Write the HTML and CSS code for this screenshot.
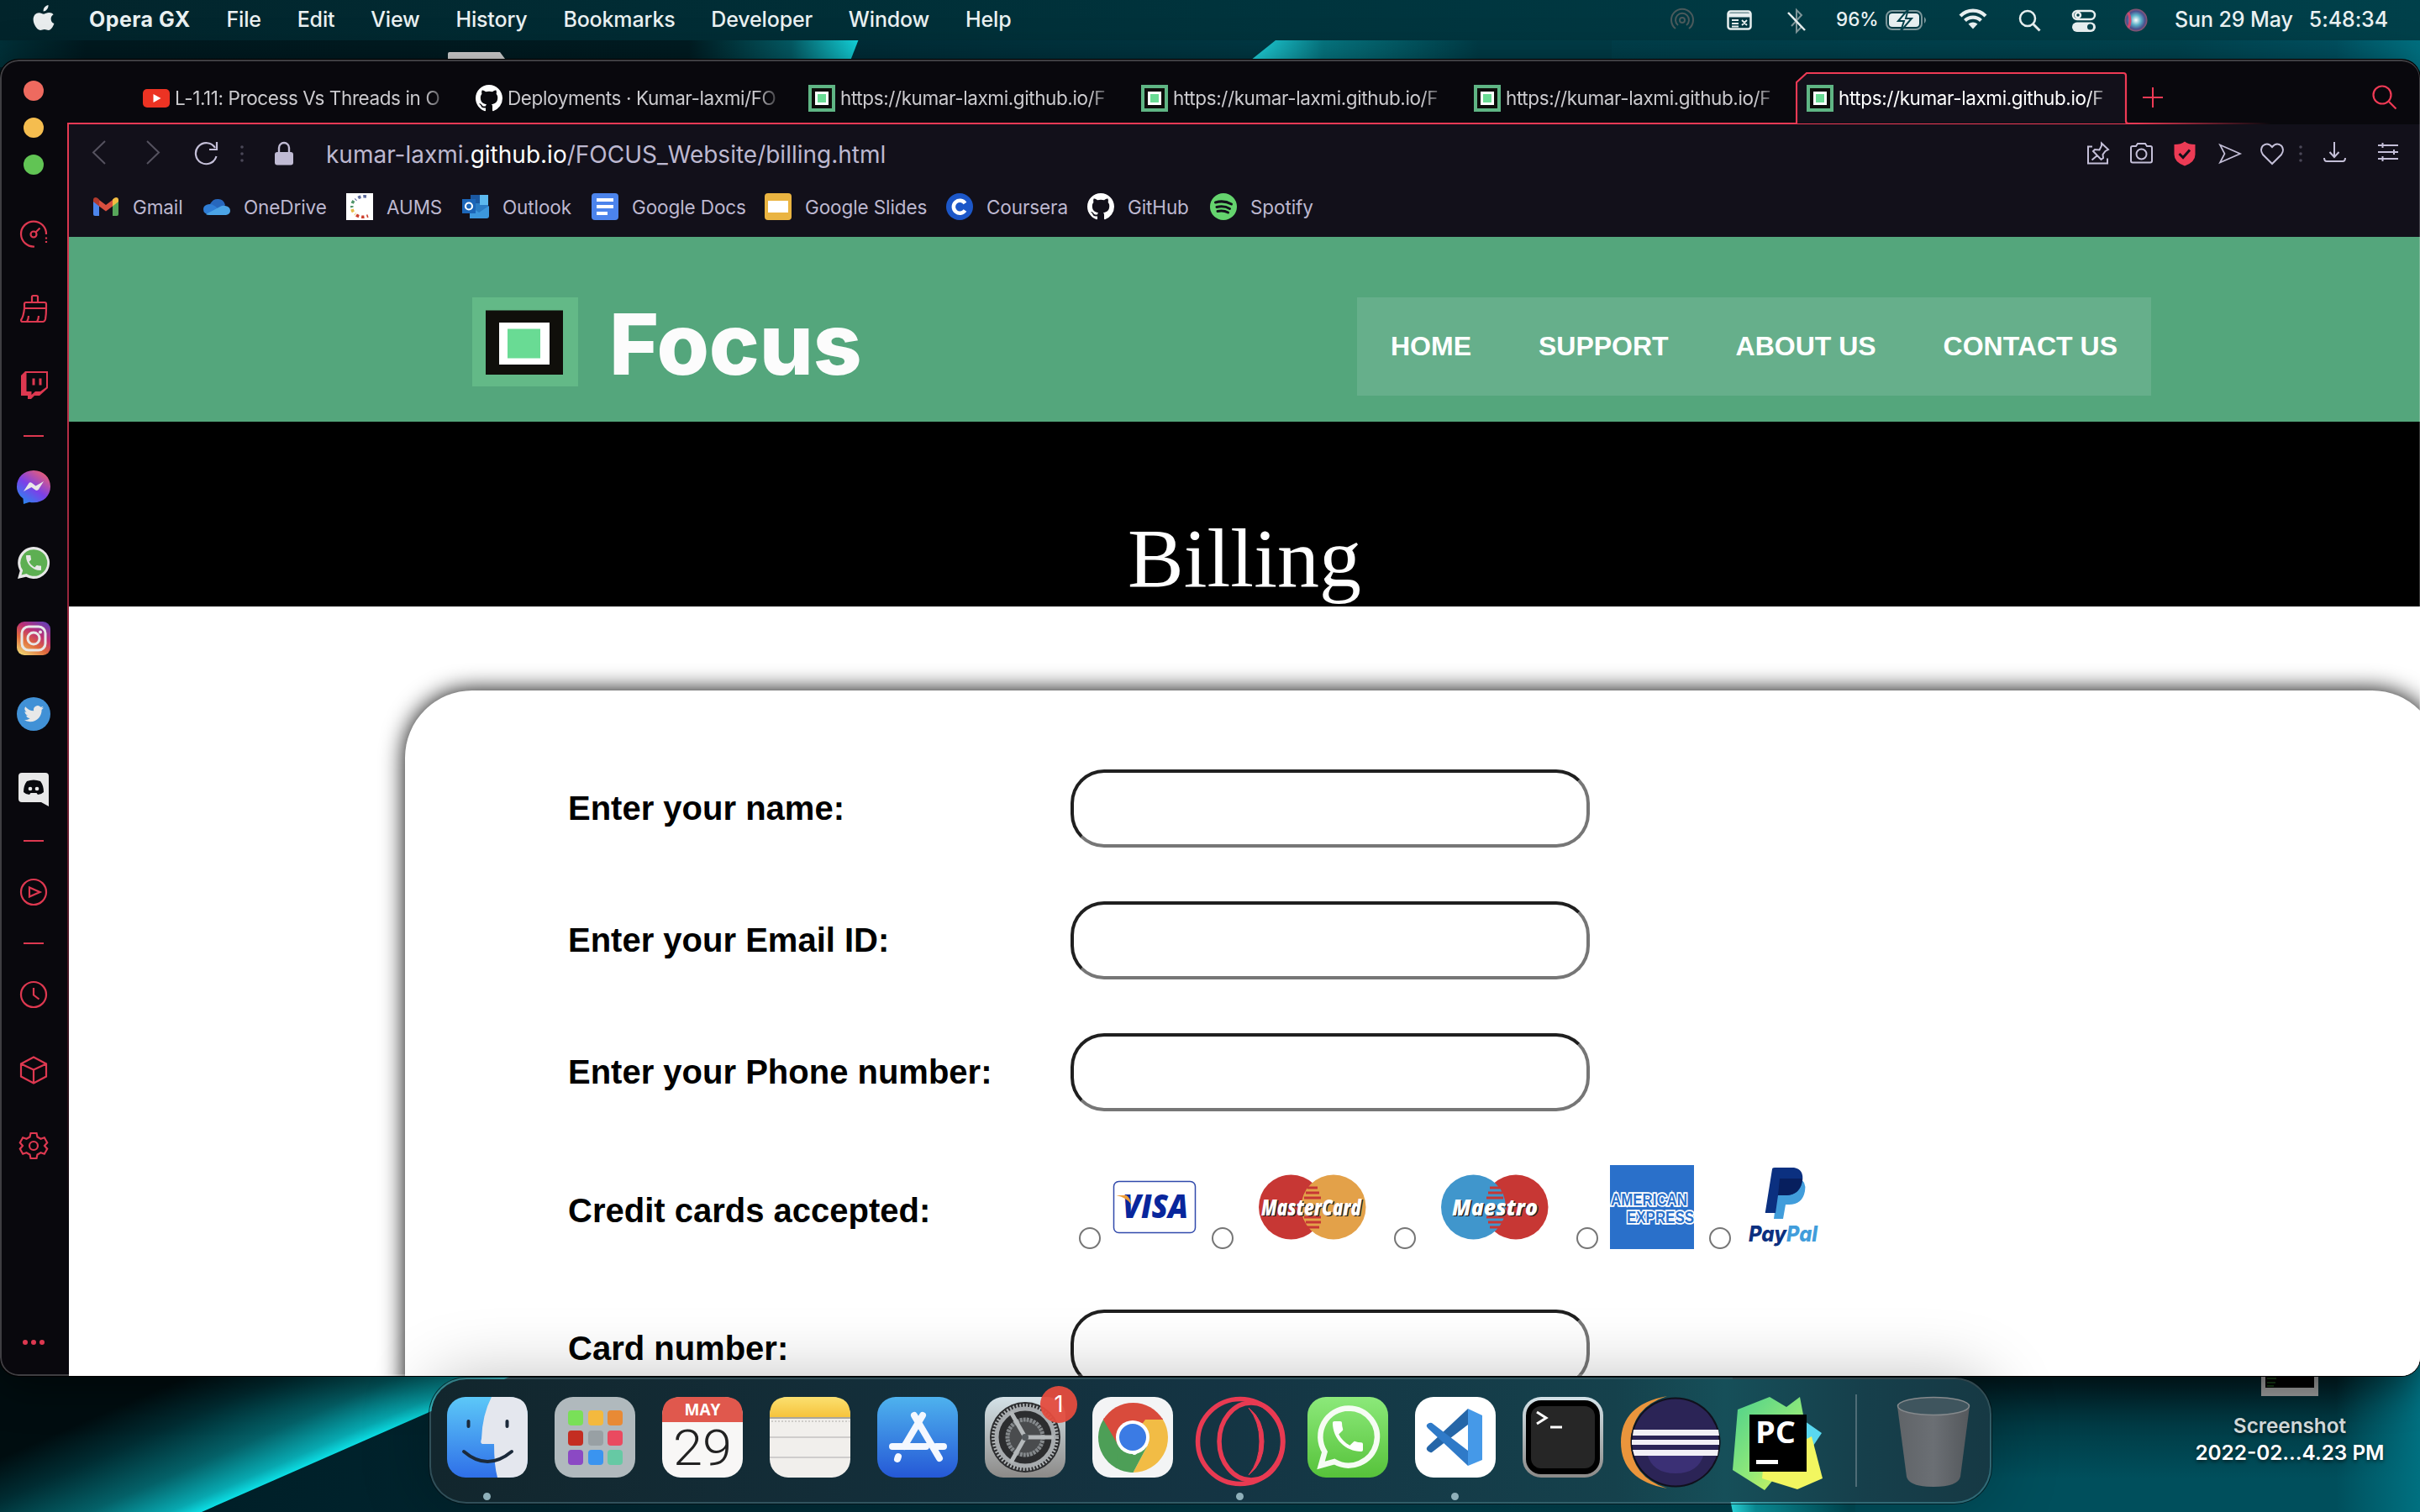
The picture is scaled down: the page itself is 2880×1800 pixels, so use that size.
FILE: index.html
```html
<!DOCTYPE html>
<html lang="en">
<head>
<meta charset="utf-8">
<title>Billing</title>
<link rel="stylesheet" href="styles.css">
</head>
<body>
<svg class="defs" width="0" height="0">
  <symbol id="focus" viewBox="0 0 32 32"><path fill="#5fb584" d="M0 0h32v32H0z"/><path fill="#0d0d0b" d="M4 4h24v24H4z"/><path fill="#fff" d="M8 8h16v16H8z"/><path fill="#69db94" d="M11 11h10v10H11z"/></symbol>
  <symbol id="github" viewBox="0 0 16 16"><path fill="#fff" d="M8 0C3.58 0 0 3.58 0 8c0 3.54 2.29 6.53 5.47 7.59.4.07.55-.17.55-.38 0-.19-.01-.82-.01-1.49-2.01.37-2.53-.49-2.69-.94-.09-.23-.48-.94-.82-1.13-.28-.15-.68-.52-.01-.53.63-.01 1.08.58 1.23.82.72 1.21 1.87.87 2.33.66.07-.52.28-.87.51-1.07-1.78-.2-3.64-.89-3.64-3.95 0-.87.31-1.59.82-2.15-.08-.2-.36-1.02.08-2.12 0 0 .67-.21 2.2.82.64-.18 1.32-.27 2-.27s1.36.09 2 .27c1.53-1.04 2.2-.82 2.2-.82.44 1.1.16 1.92.08 2.12.51.56.82 1.27.82 2.15 0 3.07-1.87 3.75-3.65 3.95.29.25.54.73.54 1.48 0 1.07-.01 1.93-.01 2.2 0 .21.15.46.55.38A8.01 8.01 0 0 0 16 8c0-4.42-3.58-8-8-8z"/></symbol>
  <symbol id="phone" viewBox="0 0 24 24"><path d="M6.6 10.8c1.4 2.8 3.8 5.1 6.6 6.6l2.2-2.2c.3-.3.7-.4 1-.2 1.1.4 2.3.6 3.6.6.6 0 1 .4 1 1V20c0 .6-.4 1-1 1C10.6 21 3 13.400 3 4c0-.6.4-1 1-1h3.500c.6 0 1 .4 1 1 0 1.300.2 2.500.6 3.600.1.300 0 .7-.3 1z"/></symbol>
  <linearGradient id="gFinder" x2="0" y2="1"><stop stop-color="#5cc8f8"/><stop offset="1" stop-color="#2f6fe8"/></linearGradient>
  <linearGradient id="gStore" x2="0" y2="1"><stop stop-color="#4eb2ee"/><stop offset="1" stop-color="#2558d6"/></linearGradient>
  <linearGradient id="gWa" x2="0" y2="1"><stop stop-color="#8ce97a"/><stop offset="1" stop-color="#56c23a"/></linearGradient>
  <linearGradient id="gGear" x2="0" y2="1"><stop stop-color="#d4e2e8"/><stop offset="1" stop-color="#8c8a88"/></linearGradient>
  <linearGradient id="gTrash"><stop stop-color="#606468"/><stop offset=".5" stop-color="#6b6f74"/><stop offset="1" stop-color="#54585c"/></linearGradient>
  <linearGradient id="gMsg" x1=".1" y1="1" x2=".8" y2="0"><stop stop-color="#1f8ff0"/><stop offset=".5" stop-color="#7b40e8"/><stop offset="1" stop-color="#ef6070"/></linearGradient>
  <linearGradient id="gIg" x1=".2" y1="1" x2=".8" y2="0"><stop stop-color="#efd070"/><stop offset=".35" stop-color="#e06a3c"/><stop offset=".65" stop-color="#bd3075"/><stop offset="1" stop-color="#6a3fb4"/></linearGradient>
  <linearGradient id="gMac" x2="0" y2="1"><stop stop-color="#fbe070"/><stop offset="1" stop-color="#f6c33c"/></linearGradient>
  <linearGradient id="gPc" x2="1" y2="1"><stop stop-color="#4cd08c"/><stop offset=".5" stop-color="#8ee87a"/><stop offset="1" stop-color="#fcf84a"/></linearGradient>
  <radialGradient id="gSiri"><stop stop-color="#fff"/><stop offset=".45" stop-color="#5ab0c8"/><stop offset=".8" stop-color="#49508e"/><stop offset="1" stop-color="#98566e"/></radialGradient>
</svg>

<div class="desktop">
  <svg class="wallpaper" width="2880" height="1800" viewBox="0 0 2880 1800">
    <defs>
      <linearGradient id="wBase"><stop stop-color="#001a22"/><stop offset=".35" stop-color="#002d38"/><stop offset=".6" stop-color="#003e4a"/><stop offset=".9" stop-color="#004450"/><stop offset="1" stop-color="#00586a"/></linearGradient>
      <linearGradient id="wStreak" gradientUnits="userSpaceOnUse" x1="300" y1="1774" x2="238" y2="1632"><stop stop-color="#0ce0e6"/><stop offset=".1" stop-color="#08a8b0"/><stop offset=".35" stop-color="#046168"/><stop offset=".7" stop-color="#002c32"/><stop offset="1" stop-color="#000d10"/></linearGradient>
      <linearGradient id="wTop" gradientUnits="userSpaceOnUse" x1="0" x2="1024"><stop stop-color="#003038"/><stop offset=".1" stop-color="#001a20"/><stop offset=".8" stop-color="#001c22"/><stop offset=".92" stop-color="#045c66"/><stop offset="1" stop-color="#14dce4"/></linearGradient>
      <linearGradient id="wTop2" gradientUnits="userSpaceOnUse" x1="1495" x2="1760"><stop stop-color="#1fd2dc"/><stop offset=".3" stop-color="#067782"/><stop offset="1" stop-color="#003c47"/></linearGradient>
      <linearGradient id="wRight" gradientUnits="userSpaceOnUse" y1="1638" y2="1760" x2="0"><stop stop-color="#001c22"/><stop offset=".5" stop-color="#003c46"/><stop offset="1" stop-color="#004f5c"/></linearGradient>
      <linearGradient id="wEdge"><stop stop-color="#007484" stop-opacity="0"/><stop offset="1" stop-color="#007080"/></linearGradient>
      <linearGradient id="wCut" gradientUnits="userSpaceOnUse" x1="2062" x2="2200"><stop stop-color="#2ce6ea"/><stop offset=".2" stop-color="#0a98a2"/><stop offset="1" stop-color="#004b56"/></linearGradient>
    </defs>
    <path fill="url(#wBase)" d="M0 0h2880v1800H0z"/>
    <path fill="url(#wTop)" d="M0 0h1040l-31 80H0z"/>
    <path fill="url(#wTop2)" d="M1518 48h400v32h-440z"/>
    <path fill="url(#wStreak)" d="M0 1620h650L240 1800H0z"/>
    <path fill="url(#wRight)" d="M2062 1620h818v180h-818z"/>
    <path fill="url(#wCut)" d="M2058 1780h150v20h-146z"/>
    <path fill="url(#wEdge)" d="M2780 1620h100v180h-100zM2780 48h100v60h-100z"/>
    <path fill="#d4d4d4" d="M533 64q0-2 2-2h60l9 12h-71z"/>
  </svg>

  <header class="menubar">
    <svg class="apple" width="28" height="34" viewBox="0 0 28 34"><path d="M19.500 1c.2 2.500-.8 4.300-1.900 5.500-1.100 1.300-2.600 2-4 1.900-.2-2 .7-3.900 1.800-5.100C16.500 2.100 18.200 1.200 19.500 1zM25.600 12.200c-2 1.200-3 2.900-3 5.200 0 2.700 1.400 4.600 3.800 5.500-.9 3.200-3.700 8-6.700 8-1.700 0-2.800-1-4.800-1s-3 1-4.800 1C6 31 1.600 23.700 1.600 18.300c0-5.200 3.300-8.100 6.800-8.100 2.300 0 4.100 1.500 5.800 1.500 1.500 0 3.500-1.600 6.300-1.600 2 0 3.800.7 5.100 2.100z"/></svg>
    <nav class="menus"><b>Opera GX</b><span>File</span><span>Edit</span><span>View</span><span>History</span><span>Bookmarks</span><span>Developer</span><span>Window</span><span>Help</span></nav>
    <div class="status">
      <svg width="880" height="48" viewBox="2000 0 880 48" fill="none" stroke="#e8eff0" stroke-width="2.500">
        <g stroke="#4b5a5c" stroke-width="2"><circle cx="2002" cy="24" r="3"/><path d="M1997 30a8 8 0 1 1 10 0M1994 34a13 13 0 1 1 16 0"/></g>
        <rect x="2056.500" y="13.500" width="27" height="21" rx="3"/><path d="M2057 18h26" stroke-width="5"/><path d="M2061 24h8M2061 28h8M2061 31.500h8M2073 24l6 6M2079 24l-6 6" stroke-width="1.800"/>
        <path stroke="#7f9599" stroke-width="2" d="M2132 31l12-13-6-6v26l6-6-12-13"/><path d="M2128 15l20 21"/>
        <rect x="2245" y="13" width="42" height="22" rx="7" stroke="#7d979b" stroke-width="2"/><rect x="2248" y="16" width="36" height="16" rx="4" fill="#e8eff0" stroke="none"/><path fill="#7d979b" stroke="none" d="M2290 20q4 4 0 8z"/><path d="M2271 11l-12 14h7l-4 12 13-15h-7z" fill="#e8eff0" stroke="#04414b" stroke-width="2"/>
        <g stroke-width="4.200"><path d="M2333 19a21 21 0 0 1 30 0M2338.500 24.500a13.500 13.500 0 0 1 19 0"/></g><path fill="#e8eff0" stroke="none" d="M2348 34.500l-5.500-6q5.500-4 11 0z"/>
        <circle cx="2413" cy="22" r="9"/><path d="M2419.500 28.500l8 8" stroke-width="3"/>
        <rect x="2467" y="13" width="26" height="10" rx="5"/><circle cx="2473" cy="18" r="3"/><rect x="2466" y="26.500" width="28" height="11.500" rx="5.700" fill="#e8eff0" stroke="none"/><circle cx="2487.500" cy="32" r="3.500" fill="#04414b" stroke="none"/>
        <circle cx="2542" cy="24" r="13.500" fill="url(#gSiri)" stroke="none"/><path d="M2533 15q4 10 0 18" stroke="#d2476e" stroke-width="3"/>
      </svg>
      <span class="battery">96%</span>
      <span class="clock"><span>Sun 29 May</span><span>5:48:34</span></span>
    </div>
  </header>

  <div class="file">
    <svg width="68" height="24" viewBox="0 0 68 24"><path fill="#9c9c9c" d="M0 0h68v24H0z"/><path d="M5 0h58v14H5z"/><path stroke="#1c4a1c" stroke-width="1.500" d="M7 3h11M7 8h10M7 12h8"/></svg>
    <span class="dim">Screenshot</span><span class="name2">2022-02...4.23 PM</span>
  </div>

  <section class="window">
    <aside class="sidebar">
      <div class="lights"><i class="red"></i><i class="yellow"></i><i class="green"></i></div>
      <div class="slot"><svg width="40" height="40" viewBox="0 0 40 40"><path d="M21 35.500A15 15 0 1 1 35 21M35 24.500v2M35 29v2"/><circle cx="20" cy="21" r="3.500"/><path d="M22.500 18.500l5-5"/></svg></div>
      <div class="slot"><svg width="40" height="40" viewBox="0 0 40 40"><path d="M18 12V5.500q0-1.500 1.500-1.500h4q1.500 0 1.500 1.500V12M9 19v-5q0-2 2-2h22q2 0 2 2v5zM9 19Q8 29 5 33q0 2 2 2h24q2 0 3-3 1-6 1-13M12 35q2-3 2-7M24 35q2-3 2-7"/></svg></div>
      <div class="slot"><svg width="40" height="40" viewBox="0 0 40 40"><path fill="#dd3850" stroke="none" d="M5 9l5-5h27v20l-10 9h-6l-4 4h-4v-4H5z"/><path fill="#09090e" stroke="none" d="M11.500 6H35v17l-7 5h-6l-4.500 4v-4h-6z"/><path stroke-width="3" d="M20 12.500v8M28 12.500v8"/></svg></div>
      <div class="dash"></div>
      <div class="slot"><svg width="40" height="40" viewBox="0 0 40 40" stroke="none"><path fill="url(#gMsg)" stroke="none" d="M20 0c11.500 0 20 8.300 20 19.300s-8.500 19-20 19c-2 0-3.500-.2-5-.6L8 40l-.5-6.500C3 30 0 25.500 0 19.300 0 8.300 8.500 0 20 0z"/><path fill="#e8e8e8" stroke="none" d="M8 25l6-9.300q1.700-2.300 4-.7l4.500 3.500L32 13l-6 9.500q-1.700 2.300-4 .7L17.500 20z"/></svg></div>
      <div class="slot"><svg width="40" height="40" viewBox="0 0 40 40"><path fill="#e8e8e8" stroke="none" d="M20 1a19 19 0 1 1-9 35.700L1 39l2.700-9.600A19 19 0 0 1 20 1z"/><path fill="#5daf52" stroke="none" d="M20 4.200A15.800 15.800 0 1 1 11.500 33L5.500 34.500 7.200 29A15.800 15.800 0 0 1 20 4.200z"/><use href="#phone" x="8" y="8" width="24" height="24" fill="#e8e8e8" stroke="none"/></svg></div>
      <div class="slot"><svg width="40" height="40" viewBox="0 0 40 40"><rect width="40" height="40" rx="9" fill="url(#gIg)" stroke="none"/><g stroke="#e8e8e8" stroke-width="3"><rect x="6" y="6" width="28" height="28" rx="8"/><circle cx="20" cy="20" r="7"/></g><circle cx="28" cy="12.500" r="2" fill="#e8e8e8" stroke="none"/></svg></div>
      <div class="slot"><svg width="40" height="40" viewBox="0 0 40 40"><circle cx="20" cy="20" r="20" fill="#4191d6" stroke="none"/><path fill="#e8e8e8" stroke="none" transform="translate(8.500 8) scale(.98)" d="M24 4.600a9.900 9.900 0 0 1-2.800.8 4.900 4.900 0 0 0 2.200-2.700c-1 .6-2 1-3.100 1.200a4.900 4.900 0 0 0-8.400 4.500A14 14 0 0 1 1.700 3.200a4.900 4.900 0 0 0 1.500 6.500c-.8 0-1.600-.2-2.200-.6 0 2.300 1.600 4.400 3.900 4.900-.7.200-1.500.2-2.200.1a4.900 4.900 0 0 0 4.600 3.400A9.900 9.900 0 0 1 0 19.500a13.900 13.900 0 0 0 7.500 2.200c9.100 0 14.300-7.700 14-14.600A10 10 0 0 0 24 4.600z"/></svg></div>
      <div class="slot"><svg width="40" height="40" viewBox="0 0 40 40"><path fill="#e8e8e8" stroke="none" d="M2 4q0-4 4-4h28q4 0 4 4v36l-9-5H6q-4 0-4-4z"/><path fill="#08090d" stroke="none" d="M12 10q8-3 16 0 4 5 4 13-3 3-7 3l-1.500-2h-7L15 26q-4 0-7-3 0-8 4-13z"/><g fill="#e8e8e8" stroke="none"><circle cx="16" cy="19" r="2.300"/><circle cx="24" cy="19" r="2.300"/></g></svg></div>
      <div class="dash"></div>
      <div class="slot"><svg width="40" height="40" viewBox="0 0 40 40"><circle cx="20" cy="20" r="15"/><path d="M15 14.500v11l12.500-5.500z"/></svg></div>
      <div class="dash"></div>
      <div class="slot"><svg width="40" height="40" viewBox="0 0 40 40"><circle cx="20" cy="20" r="15"/><path d="M20 12v8.500l6.500 5"/></svg></div>
      <div class="slot"><svg width="40" height="40" viewBox="0 0 40 40"><path d="M20 4.500l15 8v15l-15 8-15-8v-15zM5 12.500l15 7 15-7M20 19.500v16"/></svg></div>
      <div class="slot"><svg width="40" height="40" viewBox="0 0 40 40"><circle cx="20" cy="20" r="5"/><path d="M16.500 5h7l1 4.500 4 2.200 4.300-1.400 3.400 6L33 20l3.200 3.700-3.400 6-4.300-1.400-4 2.200-1 4.500h-7l-1-4.500-4-2.200-4.300 1.400-3.400-6L7 20l-3.200-3.700 3.400-6 4.300 1.400 4-2.200z"/></svg></div>
      <div class="more"><i></i><i></i><i></i></div>
    </aside>

    <div class="main">
      <div class="tabs">
        <div class="tab"><svg width="32" height="32" viewBox="0 0 32 32"><rect y="5" width="32" height="22" rx="5" fill="#ec3323"/><path fill="#fff" d="M12.500 11v10l9-5z"/></svg><span>L-1.11: Process Vs Threads in O</span></div>
        <div class="tab"><svg width="32" height="32"><use href="#github"/></svg><span>Deployments · Kumar-laxmi/FO</span></div>
        <div class="tab"><svg width="32" height="32"><use href="#focus"/></svg><span>https://kumar-laxmi.github.io/F</span></div>
        <div class="tab"><svg width="32" height="32"><use href="#focus"/></svg><span>https://kumar-laxmi.github.io/F</span></div>
        <div class="tab"><svg width="32" height="32"><use href="#focus"/></svg><span>https://kumar-laxmi.github.io/F</span></div>
        <div class="tab active"><svg class="shape" width="396" height="64" viewBox="0 0 396 64"><path fill="#12101a" stroke="#ef3a55" stroke-width="2.200" d="M0 63h1V14L13 3h377q3 0 3 3v54q0 3 3 3"/></svg><svg width="32" height="32"><use href="#focus"/></svg><span>https://kumar-laxmi.github.io/F</span></div>
        <svg class="plus" width="24" height="24" viewBox="0 0 24 24"><path d="M12 0v24M0 12h24"/></svg>
        <svg class="find" width="30" height="30" viewBox="0 0 30 30"><circle cx="12" cy="12" r="10.500"/><path d="M20 20l8.500 8.500"/></svg>
      </div>
      <div class="toolbar">
        <svg width="320" height="70" viewBox="82 149 320 70" fill="none" stroke-width="2">
          <path stroke="#55525f" d="M125 169l-14 13.500 14 13.500M175 169l14 13.500-14 13.500"/>
          <g stroke="#c4bfd8" stroke-width="2.200"><path d="M256 177a12.500 12.500 0 1 0 1.500 10"/><path d="M258 170v9h-9"/></g>
          <g fill="#4b4858"><circle cx="288" cy="176" r="1.800"/><circle cx="288" cy="184" r="1.800"/><circle cx="288" cy="192" r="1.800"/></g>
          <rect x="327" y="182" width="22" height="15.500" rx="3" fill="#c0bbd4"/><path stroke="#c0bbd4" stroke-width="2.400" d="M332 183v-6a6 6 0 0 1 12 0v6"/>
        </svg>
        <span class="url">kumar-laxmi.<b>github.io</b>/FOCUS_Website/billing.html</span>
        <svg class="tools" width="400" height="70" viewBox="2480 149 400 70" fill="none" stroke="#c4bfd8" stroke-width="2">
          <path d="M2490 175.500h-5v20h23v-6M2501 171.500l8 7.500-3.500 2-3 4 .5 4-2.500 2-9.500-10 2-2 5.500.5 2.500-5zM2496 186l-6.500 5.500"/>
          <path d="M2536 177q0-2 2-2h4l2-3h9l2 3h4q2 0 2 2v15.500q0 2-2 2h-21q-2 0-2-2z"/><circle cx="2548.500" cy="184.500" r="6"/>
          <path fill="#ec3b55" stroke="none" d="M2600 169.500q4 3.500 12.500 3.500v12q0 9-12.500 13.500-12.500-4.500-12.500-13.500v-12q8.500 0 12.500-3.500z"/><path stroke="#12101a" stroke-width="3" d="M2593.500 184l4.500 4.500 8-9"/>
          <path stroke-width="1.700" d="M2642 173.500l24 10.500-24 10.500 5.500-10.500z"/>
          <path d="M2704 196l-11-11q-4-6 0-10.500 6-4.500 11 1.500 5-6 11-1.500 4 4.500 0 10.500z"/>
          <g fill="#4b4858" stroke="none"><circle cx="2738" cy="176" r="1.800"/><circle cx="2738" cy="184" r="1.800"/><circle cx="2738" cy="192" r="1.800"/></g>
          <path d="M2778 170v18M2772.500 182l5.500 6 5.500-6M2766 189q0 4 3 4h19q3 0 3-4"/>
          <path d="M2830 174h24M2830 182h24M2830 190h24M2835.500 171v6M2849 179v6M2835.500 187v6"/>
        </svg>
      </div>
      <div class="bookmarks">
        <a class="w131"><svg width="32" height="32" viewBox="0 0 32 32"><path fill="#4c85ec" d="M1 10h7v17H3q-2 0-2-2z"/><path fill="#57a65a" d="M24 10h7v15q0 2-2 2h-5z"/><path fill="#d94f3f" d="M8 8l8 6 8-6v7.500l-8 6-8-6z"/><path fill="#b03a2e" d="M1 10V8q0-3 3-3 2 0 4 2.500v8z"/><path fill="#f3bc42" d="M31 10V8q0-3-3-3-2 0-4 2.500v8z"/></svg>Gmail</a>
        <a class="w170"><svg width="32" height="32" viewBox="0 0 32 32"><path fill="#2767bd" d="M7 15q4-9 11-8 6 0 8 7l-6 7z"/><path fill="#2f7ed6" d="M7 25q-7 0-7-6 0-5 7-6 5 0 10 5l-6 7z"/><path fill="#4ba4e6" d="M3 25l17-9q3-2 6-1 6 1 6 6 0 4-5 5H7q-3 0-4-1z"/></svg>OneDrive</a>
        <a class="w138"><svg width="32" height="32" viewBox="0 0 32 32"><path fill="#fff" d="M0 0h32v32H0z"/><g fill="none" stroke-width="3.500" stroke-dasharray="3.500 3"><path stroke="#5c6a9c" d="M24 4q-8-1-13 4"/><path stroke="#4f9468" d="M9 9q-3 4-2 8"/><path stroke="#e6bc46" d="M7 19q1 4 4 6"/><path stroke="#cc3f2d" d="M12 26q6 4 14 1"/></g></svg>AUMS</a>
        <a class="w155"><svg width="32" height="32" viewBox="0 0 32 32"><path fill="#2b7cc4" d="M10 2h21v26H10z"/><path fill="#1b58a0" d="M10 2h11v10H10z"/><path fill="#5cb8ee" d="M21 2h10v12H21z"/><path fill="#3c97dc" d="M9 30V15l11 8 12-8v12q0 3-3 3z"/><path fill="#1c66b8" d="M0 7h16v17H0z"/><circle cx="8" cy="15.500" r="4" fill="none" stroke="#fff" stroke-width="2.200"/></svg>Outlook</a>
        <a class="w206"><svg width="32" height="32" viewBox="0 0 32 32"><rect width="32" height="32" rx="4" fill="#4c84ec"/><path fill="#fff" d="M6 6h20v4H6zM6 14h20v4H6zM6 22h13v4H6z"/></svg>Google Docs</a>
        <a class="w216"><svg width="32" height="32" viewBox="0 0 32 32"><rect width="32" height="32" rx="4" fill="#eab441"/><path fill="#fff" d="M4 9h24v14H4z"/></svg>Google Slides</a>
        <a class="w168"><svg width="32" height="32" viewBox="0 0 32 32"><circle cx="16" cy="16" r="16" fill="#1c57c8"/><path fill="none" stroke="#fff" stroke-width="4.500" d="M22.500 12a7.500 7.500 0 1 0 0 8.500"/></svg>Coursera</a>
        <a class="w146"><svg width="32" height="32"><use href="#github"/></svg>GitHub</a>
        <a><svg width="32" height="32" viewBox="0 0 32 32"><circle cx="16" cy="16" r="16" fill="#65d46e"/><path fill="none" stroke="#12101a" stroke-linecap="round" stroke-width="3" d="M6.500 11q10-3 19 2M8 16.500q9-2 15.500 2M9 21.500q7-1.500 12.500 1.500"/></svg>Spotify</a>
      </div>

      <div class="page">
        <div class="site-head">
          <div class="brand"><svg width="126" height="106" viewBox="0 0 126 106"><path fill="#63b987" d="M0 0h126v106H0z"/><path fill="#100f0b" d="M16 15.500h92V92H16z"/><path fill="#fff" d="M32 30h60v50H32z"/><path fill="#69db94" d="M42 37.500h39v35H42z"/></svg><span>Focus</span></div>
          <nav class="site-nav"><a>HOME</a><a>SUPPORT</a><a>ABOUT US</a><a>CONTACT US</a></nav>
        </div>
        <h1 class="title">Billing</h1>
        <form class="card">
          <label>Enter your name:</label><input type="text">
          <label>Enter your Email ID:</label><input type="text">
          <label>Enter your Phone number:</label><input type="text">
          <label>Credit cards accepted:</label>
          <div class="cards">
            <i class="radio"></i>
            <svg width="100" height="100" viewBox="0 0 100 100"><rect x="1.500" y="19.500" width="97" height="61" rx="6" fill="#fff" stroke="#3049ab" stroke-width="1.500"/><text x="12" y="62.500" class="visa" textLength="78" lengthAdjust="spacingAndGlyphs">VISA</text><path fill="#ee9d35" d="M4.500 36h12q4 2 6 11-5-8-18-11z"/></svg>
            <i class="radio"></i>
            <svg width="159" height="100" viewBox="0 0 159 100"><circle cx="54.500" cy="50" r="38.500" fill="#c73734"/><circle cx="105" cy="50" r="38.500" fill="#e3a149"/><path stroke="#c73734" stroke-width="3" d="M74 27h12M72 33h16M70 39h20M70 62h20M72 68h18M74 74h14"/><text x="20.500" y="61" class="mc shade" textLength="119" lengthAdjust="spacingAndGlyphs">MasterCard</text><text x="19" y="59.500" class="mc" textLength="119" lengthAdjust="spacingAndGlyphs">MasterCard</text></svg>
            <i class="radio"></i>
            <svg width="159" height="100" viewBox="0 0 159 100"><circle cx="105" cy="50" r="38.500" fill="#c73734"/><circle cx="54.500" cy="50" r="38.500" fill="#4096cc"/><path stroke="#c73734" stroke-width="3" d="M74 27h12M72 33h17M70 39h20M70 62h22M72 68h19M74 74h14"/><text x="30.500" y="61" class="mc shade" textLength="102" lengthAdjust="spacingAndGlyphs">Maestro</text><text x="29" y="59.500" class="mc" textLength="102" lengthAdjust="spacingAndGlyphs">Maestro</text></svg>
            <i class="radio"></i>
            <svg width="100" height="100" viewBox="0 0 100 100"><path fill="#2a70ca" d="M0 0h100v100H0z"/><text x="1" y="48" class="amex" textLength="91" lengthAdjust="spacingAndGlyphs">AMERICAN</text><text x="20" y="69" class="amex" textLength="80" lengthAdjust="spacingAndGlyphs">EXPRESS</text></svg>
            <i class="radio"></i>
            <svg width="100" height="100" viewBox="0 0 100 100"><path fill="#419ddb" d="M43 16h24q9 3 7 15-3 16-19 16h-4l-3 17H37z"/><path fill="#0b3080" d="M38 3h23q12 2 10 16-3 17-20 17h-9l-3 21H28q-2 0-1-2l8-50q0-2 3-2z"/><path fill="#071f5e" d="M44 16h24q3 0 3 1-2 18-19 19H42z"/><text x="7" y="91" class="pp" textLength="45" lengthAdjust="spacingAndGlyphs">Pay</text><text x="52" y="91" class="pp pal" textLength="37" lengthAdjust="spacingAndGlyphs">Pal</text></svg>
          </div>
          <label>Card number:</label><input type="text">
        </form>
      </div>
    </div>
  </section>

  <footer class="dock">
    <div class="app on"><svg width="98" height="98" viewBox="0 0 98 98"><rect x="1" y="1" width="96" height="96" rx="22" fill="url(#gFinder)"/><path fill="#e4e7ee" d="M54 1h21q22 0 22 22v52q0 22-22 22H61q-4-14-4-40H43q-3-1-1-6Q43 22 54 1z"/><path fill="none" stroke="#1b2a3a" stroke-width="4" stroke-linecap="round" d="M26.500 30v6M72.500 30v6M21 66q28 24 57 0"/></svg></div>
    <div class="app"><svg width="98" height="98" viewBox="0 0 98 98"><rect x="1" y="1" width="96" height="96" rx="22" fill="#b0b9bd"/><g><rect x="17" y="17" width="18" height="18" rx="4" fill="#79e058"/><rect x="41" y="17" width="18" height="18" rx="4" fill="#f4b93e"/><rect x="64" y="17" width="18" height="18" rx="4" fill="#e88a35"/><rect x="17" y="41" width="18" height="18" rx="4" fill="#c42d22"/><rect x="41" y="41" width="18" height="18" rx="4" fill="#98a0a4"/><rect x="64" y="41" width="18" height="18" rx="4" fill="#ea4a60"/><rect x="17" y="64" width="18" height="18" rx="4" fill="#8b49c4"/><rect x="41" y="64" width="18" height="18" rx="4" fill="#3a94f0"/><rect x="64" y="64" width="18" height="18" rx="4" fill="#66c9a4"/></g></svg></div>
    <div class="app"><svg width="98" height="98" viewBox="0 0 98 98"><rect x="1" y="1" width="96" height="96" rx="22" fill="#f8f7f6"/><path fill="#e0584d" d="M1 31v-8Q1 1 23 1h52q22 0 22 22v8z"/><text x="49" y="23" class="month">MAY</text><text x="49" y="82" class="day" textLength="70" lengthAdjust="spacingAndGlyphs">29</text></svg></div>
    <div class="app"><svg width="98" height="98" viewBox="0 0 98 98"><rect x="1" y="1" width="96" height="96" rx="22" fill="#f1efec"/><path fill="url(#gMac)" d="M1 25v-2Q1 1 23 1h52q22 0 22 22v2z"/><path fill="#a9a69c" d="M1 25h96v2H1z"/><path stroke="#c4c2be" stroke-width="1.500" stroke-dasharray="2 2" d="M3 30h93"/><path stroke="#cfcdcc" stroke-width="2" d="M1 49h96M1 73h96"/></svg></div>
    <div class="app"><svg width="98" height="98" viewBox="0 0 98 98"><rect x="1" y="1" width="96" height="96" rx="22" fill="url(#gStore)"/><g stroke="#f4f8ff" stroke-width="8" stroke-linecap="round"><path d="M45 23l30 51M55 23L33 60M19 60h40M71 60h9M26 72l-1 3"/></g></svg></div>
    <div class="app"><svg width="98" height="98" viewBox="0 0 98 98"><rect x="1" y="1" width="96" height="96" rx="22" fill="url(#gGear)"/><circle cx="49" cy="49" r="42" fill="#2c2d2f"/><circle cx="49" cy="49" r="34" fill="none" stroke="#a7abae" stroke-width="5"/><circle cx="49" cy="49" r="38" fill="none" stroke="#b0b4b6" stroke-width="4" stroke-dasharray="2 2"/><circle cx="49" cy="49" r="21" fill="#4a4c4e" stroke="#85898c" stroke-width="5" stroke-dasharray="3 1"/><path stroke="#b4b8ba" stroke-width="5" d="M49 49h34M49 49L32 19M49 49L32 79"/><circle cx="49" cy="49" r="4" fill="#53585c"/></svg><b class="badge">1</b></div>
    <div class="app"><svg width="98" height="98" viewBox="0 0 98 98"><rect x="1" y="1" width="96" height="96" rx="22" fill="#f3f4f5"/><path fill="#d94b3c" d="M49 49L14 28a41.500 41.500 0 0 1 71 0z"/><path fill="#4d9f57" d="M49 49L14 28a41.500 41.500 0 0 0 35.500 63z"/><path fill="#f2bc45" d="M49 49l15-21h21a41.500 41.500 0 0 1-35.500 63L67 58z"/><path fill="#d94b3c" d="M14 28l18 31 10-22 8-9h35l-1-2H15z"/><path fill="#4d9f57" d="M32 59q8 12 20 11l14-10-16.500 31q-12-1-20-9z"/><circle cx="49" cy="49" r="20" fill="#fff"/><circle cx="49" cy="49" r="16" fill="#3b7be4"/></svg></div>
    <div class="app on"><svg width="108" height="108" viewBox="0 0 108 108" fill="none" stroke="#e83a52"><circle cx="54" cy="54" r="50.500" stroke-width="5.500"/><ellipse cx="67" cy="54" rx="38" ry="46" stroke-width="5.500"/><path fill="#e83a52" stroke-width="1" d="M64 14q18 14 18 40T64 94q13-16 13-40T64 14z"/></svg></div>
    <div class="app"><svg width="98" height="98" viewBox="0 0 98 98"><rect x="1" y="1" width="96" height="96" rx="22" fill="url(#gWa)"/><path fill="none" stroke="#f6fcf4" stroke-width="6.500" d="M50 14.500a34 34 0 1 1-17 63.500l-16 4.500 4.500-16A34 34 0 0 1 50 14.500z"/><use href="#phone" x="25" y="24" width="48" height="48" fill="#fff"/></svg></div>
    <div class="app on"><svg width="98" height="98" viewBox="0 0 98 98"><rect x="1" y="1" width="96" height="96" rx="22" fill="#fff"/><path fill="#2566a8" d="M16 60L64 15v19L21 67q-3 1-6-3-1-2 1-4z"/><path fill="#2f7ac8" d="M16 38L64 83V65L21 32q-3-1-6 2-1 2 1 4z"/><path fill="#4599e8" d="M64 15l17 8v53l-17 7z"/></svg></div>
    <div class="app"><svg width="98" height="98" viewBox="0 0 98 98"><rect x="1" y="1" width="96" height="96" rx="22" fill="url(#gGear)"/><rect x="5" y="5" width="88" height="88" rx="18"/><rect x="11" y="12" width="76" height="74" rx="12" fill="#262626"/><path fill="none" stroke="#fff" stroke-width="3" d="M18 19l11 7-11 7M34 37h14"/></svg></div>
    <div class="app"><svg width="122" height="110" viewBox="0 0 122 110"><path fill="#ea953c" d="M57 0Q2 10 2 55t55 55Q14 96 14 55T57 0z"/><circle cx="67" cy="55" r="53.500" fill="#10101c"/><circle cx="67" cy="55" r="51.500" fill="#2b2456"/><path fill="#3b3075" d="M33 68h68q-6 24-34 24T33 68z"/><path fill="#f2f0f6" d="M17 40h101l1 7H16zM15 52h104v6H15zM16 64h102l-1 7H18z"/></svg></div>
    <div class="app"><svg width="112" height="112" viewBox="0 0 112 112"><path fill="url(#gPc)" d="M8 16L46 1l20 12L82 1l6 32 12 54-16 12-34 1-10 12L2 88z"/><path fill="#59d8f0" d="M88 30l20 14-16 24z"/><path fill="#f2f660" d="M96 48l13 50-30 13-42-13 2-20z"/><path d="M22 22h68v68H22z"/><text x="29" y="56" class="pc" textLength="48" lengthAdjust="spacingAndGlyphs">PC</text><path fill="#fff" d="M30 76h26v5H30z"/></svg></div>
    <div class="sep"></div>
    <div class="app trash"><svg width="90" height="110" viewBox="0 0 90 110"><path fill="url(#gTrash)" d="M2 12l11 84q3 12 32 12t32-12l11-84z"/><ellipse cx="45" cy="12" rx="42.500" ry="10.500" fill="#3f555e" stroke="#85898c" stroke-width="1.500"/></svg></div>
  </footer>
</div>
</body>
</html>
```
FILE: styles.css
```css
* { box-sizing: border-box; }
body { margin: 0; font-family: Inter, sans-serif; }
i { font-style: normal; }
svg { flex: none; display: block; }
.defs { position: absolute; }
.desktop { position: relative; width: 2880px; height: 1800px; overflow: hidden; background: #002a34; }
.wallpaper { position: absolute; left: 0; top: 0; }

/* menu bar */
.menubar { position: relative; height: 48px; display: flex; align-items: center; justify-content: space-between; padding-left: 38px; color: #eaf1f2; font-size: 25px; font-weight: 500; background: linear-gradient(90deg, #02242b, #00333c 50%, #00404a); }
.apple { fill: #e9edee; margin-top: -4px; }
.menus { display: flex; gap: 42.800px; margin: -2px auto 0 40px; letter-spacing: -.15px; }
.menus b { font-weight: 700; letter-spacing: .45px; }
.status { position: relative; width: 880px; height: 48px; }
.status svg { overflow: visible; }
.battery, .clock { position: absolute; top: 9px; line-height: 28px; }
.battery { left: 185px; font-size: 22.500px; }
.clock { left: 588px; width: 254px; display: flex; justify-content: space-between; letter-spacing: -.1px; }

/* file on the desktop */
.file { position: absolute; left: 2575px; top: 1638px; width: 300px; display: flex; flex-direction: column; align-items: center; color: #fff; font-size: 24.300px; font-weight: 600; line-height: 32px; text-shadow: 0 2px 4px rgba(0, 0, 0, .6); }
.file svg { margin-bottom: 19px; }
.file .dim { color: #d3dadb; }

/* browser window */
.window { position: absolute; left: 0; top: 71px; width: 2880px; height: 1567px; display: flex; padding: 2px 0 0 2px; border-radius: 22px; overflow: hidden; background: #09080d; box-shadow: 0 0 0 1px #000, 0 10px 50px rgba(0, 0, 0, .5); }
.window::after { content: ""; position: absolute; inset: 0; border: 2px solid rgba(255, 255, 255, .22); border-right-width: 1px; border-radius: 22px; }
.sidebar { width: 80px; display: flex; flex-direction: column; align-items: center; padding-right: 4px; position: relative; }
.sidebar::after { content: ""; position: absolute; right: 0; top: 73px; bottom: 0; width: 2px; background: linear-gradient(#e83a52, #c0304a 20%, #7c2034 50%, #09080d 88%); }
.sidebar svg { fill: none; stroke: #dd3850; stroke-width: 2.200; }
.lights { height: 160px; padding-top: 23px; display: flex; flex-direction: column; gap: 20px; }
.lights i { width: 24px; height: 24px; border-radius: 50%; }
.red { background: #ee6a5f; }
.yellow { background: #f5bd4f; }
.green { background: #61c454; }
.slot { height: 90px; display: grid; place-items: center; }
.dash { height: 32px; width: 24px; flex: none; background: linear-gradient(#dd3850, #dd3850) center / 24px 2px no-repeat; }
.more { margin-top: auto; padding-bottom: 37px; display: flex; gap: 4px; }
.more i { width: 6px; height: 6px; border-radius: 50%; background: #dd3850; }
.main { flex: 1; min-width: 0; display: flex; flex-direction: column; }

.tabs { height: 75px; flex: none; display: flex; align-items: center; padding: 11px 0 0 88px; background: linear-gradient(90deg, #ef3a55 2456px, transparent 2620px) bottom / 100% 2px no-repeat; }
.tab { position: relative; width: 396px; height: 64px; padding-top: 1px; display: flex; align-items: center; gap: 6px; color: #cbcace; font-size: 22.500px; }
.tab span { position: relative; width: 329px; overflow: hidden; white-space: nowrap; letter-spacing: -.4px; -webkit-mask-image: linear-gradient(90deg, #000 297px, transparent 329px); mask-image: linear-gradient(90deg, #000 297px, transparent 329px); }
.tab > svg { position: relative; }
.tab.active { color: #fff; }
.tab .shape { position: absolute; left: -13px; top: 0; }
.plus { stroke: #ef3a55; stroke-width: 2; margin-left: 4px; }
.find { fill: none; stroke: #ef3a55; stroke-width: 2.200; margin: 0 27px 0 auto; }
.toolbar { height: 70px; flex: none; display: flex; align-items: center; background: #12101a; }
.url { margin: 2px 0 0 -14px; color: #bdb8d0; font-size: 28px; }
.url b { font-weight: 400; color: #fff; }
.tools { margin-left: auto; }
.bookmarks { height: 64px; flex: none; display: flex; align-items: flex-start; padding: 12px 0 0 28px; background: #12101a; color: #bdb8d0; font-size: 22.500px; }
.bookmarks a { display: flex; align-items: center; gap: 16px; height: 32px; white-space: nowrap; letter-spacing: -.1px; }
.w131 { width: 132px; } .w170 { width: 170px; } .w138 { width: 138px; } .w155 { width: 154px; } .w206 { width: 206px; } .w216 { width: 216px; } .w168 { width: 168px; } .w146 { width: 146px; }

/* web page */
.page { flex: 1; min-height: 0; overflow: hidden; background: #fff; }
.site-head { height: 220px; padding: 72px 320px 0 480px; display: flex; justify-content: space-between; align-items: flex-start; background: #54a67c; }
.brand { display: flex; gap: 37px; height: 106px; color: #fcfcfc; font-weight: 800; font-size: 101px; line-height: 110px; letter-spacing: -.2px; }
.site-nav { width: 945px; height: 117px; display: flex; align-items: center; justify-content: space-between; padding: 0 40px; background: #66af8b; color: #fff; font: bold 32px "Liberation Sans", sans-serif; white-space: nowrap; }
.title { margin: 0; height: 220px; padding-top: 105px; background: #000; color: #fff; text-align: center; font: 100px/115px "Liberation Serif", serif; }
.card { width: 2421px; height: 1200px; margin: 100px 0 0 400px; padding: 94px 0 0 194px; display: grid; grid-template-columns: 598px 1fr; grid-template-rows: 93px 93px 93px 108px 93px; row-gap: 64px; align-items: center; border-radius: 80px; background: #fff; box-shadow: 0 0 28px #000; }
.card label { font: bold 40px "Liberation Sans", sans-serif; }
.card input { width: 618px; height: 93px; margin: 0; border: 4px solid; border-color: #1f1f1f #767676 #767676 #1f1f1f; border-radius: 40px; background: #fff; }
.cards { display: flex; align-items: flex-end; height: 108px; padding: 0 0 8px 10px; }
.cards svg { margin: 0 18px 0 14px; }
.radio { flex: none; width: 26px; height: 26px; border: 2px solid #767676; border-radius: 50%; }
.visa { font: italic 900 38px "Open Sans", sans-serif; fill: #08269c; }
.mc { font: italic 800 27px "Open Sans", sans-serif; fill: #fff; }
.mc.shade { fill: #222; }
.amex { font: bold 20px "Liberation Sans", sans-serif; fill: #2a70ca; stroke: #fff; stroke-width: 3.500px; paint-order: stroke; }
.pp { font: italic 800 26px Inter, sans-serif; fill: #0b3080; }
.pp.pal { fill: #419ddb; }

/* dock */
.dock { position: absolute; left: 511px; top: 1640px; width: 1859px; height: 150px; display: flex; align-items: flex-start; padding: 20px 0 0 3px; border: 2px solid rgba(125, 150, 160, .38); border-radius: 44px; background: linear-gradient(90deg, #12262d, #143443 50%, #15414c 76%, #164f59 83%, #163f4b 92%, #163944); background-clip: padding-box; box-shadow: 0 0 0 1px rgba(0, 16, 20, .7), 0 0 80px rgba(0, 0, 0, .25); }
.app { position: relative; width: 128px; height: 94px; flex: none; display: grid; place-items: center; }
.app.on::after { content: ""; position: absolute; left: 59px; top: 115px; width: 9px; height: 9px; border-radius: 50%; background: #8fb0ba; }
.badge { position: absolute; left: 82px; top: -12px; width: 44px; height: 44px; border-radius: 50%; background: rgba(228, 76, 62, .95); color: #fff; font-size: 27px; font-weight: 400; line-height: 44px; text-align: center; }
.month { font: bold 19px "Open Sans", sans-serif; fill: #fff; text-anchor: middle; }
.day { font: 300 60px Roboto, sans-serif; fill: #222; text-anchor: middle; }
.pc { font: bold 36px "Open Sans", sans-serif; fill: #fff; }
.sep { width: 2px; height: 110px; margin: -2px 0 0 28px; background: #4f6c76; }
.trash { width: 90px; margin-left: 46px; }
```
